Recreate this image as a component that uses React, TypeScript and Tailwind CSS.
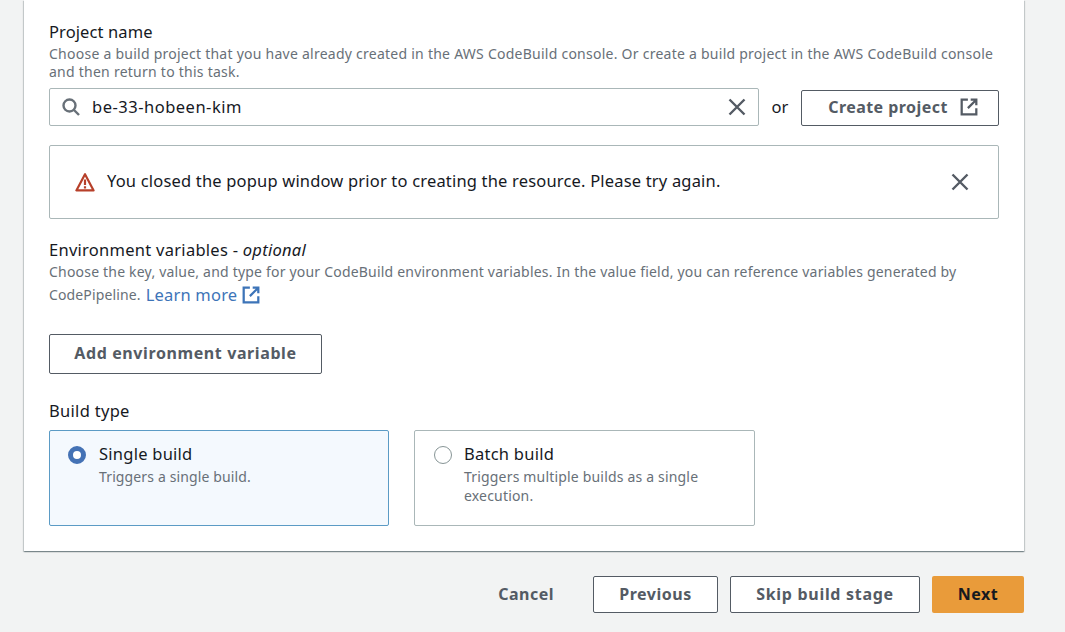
function ExternalIcon({ className }: { className?: string }) {
  return (
    <svg viewBox="0 0 16 16" fill="none" stroke="currentColor" strokeWidth={2} className={className}>
      <path d="M7 1.5H1.5v13h13V9" />
      <path d="M9.5 1.5h5v5M14.5 1.5 7 9" />
    </svg>
  )
}

function CloseIcon() {
  return (
    <svg viewBox="0 0 18 18" fill="none" stroke="#545b64" strokeWidth={2.4} className="w-[18px] h-[18px] shrink-0">
      <path d="M1.5 1.5l15 15M16.5 1.5l-15 15" />
    </svg>
  )
}

function SearchIcon() {
  return (
    <svg viewBox="0 0 18 18" fill="none" stroke="#687078" strokeWidth={2.4} className="w-[18px] h-[18px] shrink-0">
      <circle cx="7.5" cy="7.5" r="6" />
      <path d="M12 12l5 5" />
    </svg>
  )
}

function WarningIcon() {
  return (
    <svg viewBox="0 0 20 20" fill="none" className="w-5 h-5 shrink-0">
      <path d="M10 2.2 1.4 18.4h17.2L10 2.2Z" stroke="#b7402a" strokeWidth={2.2} strokeLinejoin="round" />
      <path d="M10 7.5v5.5M10 14.2v2.2" stroke="#b7402a" strokeWidth={2.2} />
    </svg>
  )
}

export default function App() {
  return (
    <div className="w-[1065px] h-[632px] overflow-hidden bg-[#f2f3f3] pl-6 font-['Noto_Sans',sans-serif] text-[#16191f]">
      <div className="w-[1000px] h-[551px] bg-white pt-[21px] px-[25px] shadow-[0_1px_1px_0_rgba(0,28,36,0.3),1px_1px_1px_0_rgba(0,28,36,0.15),-1px_1px_1px_0_rgba(0,28,36,0.15)]">
        <div className="text-[16.5px] leading-[22px] tracking-[0.1px]">Project name</div>
        <p className="mt-[2px] text-[14px] leading-[18px] tracking-[0.25px] text-[#687078]">
          Choose a build project that you have already created in the AWS CodeBuild console. Or create a build project in the AWS CodeBuild console and then return to this task.
        </p>
        <div className="flex items-center mt-[7px] h-[38px]">
          <div className="w-[710px] h-[38px] flex items-center border border-[#aab7b8] rounded-[2px] pl-[12px] pr-[12px]">
            <SearchIcon />
            <span className="ml-[12px] text-[16.5px] tracking-[0.5px] flex-1">be-33-hobeen-kim</span>
            <CloseIcon />
          </div>
          <span className="w-[42px] text-center text-[16.5px]">or</span>
          <button className="w-[198px] h-[36px] mt-[1px] pl-[6px] pb-[2px] flex items-center justify-center gap-[12px] border border-[#545b64] rounded-[2px] text-[#545b64] font-bold text-[16px] tracking-[0.45px]">
            Create project
            <ExternalIcon className="w-[18px] h-[18px]" />
          </button>
        </div>
        <div className="flex items-center mt-[19px] h-[74px] border border-[#aab7b8] rounded-[2px] pl-[25px] pr-[29px]">
          <WarningIcon />
          <span className="ml-[12px] pb-[2px] text-[16.5px] tracking-[0.18px] flex-1">You closed the popup window prior to creating the resource. Please try again.</span>
          <CloseIcon />
        </div>
        <div className="mt-[20px] text-[16.5px] leading-[22px] tracking-[0.27px]">
          Environment variables - <i>optional</i>
        </div>
        <p className="text-[14px] leading-[22px] tracking-[0.2px] text-[#687078]">
          Choose the key, value, and type for your CodeBuild environment variables. In the value field, you can reference variables generated by
        </p>
        <p className="text-[14px] leading-[24px] tracking-[0.13px] text-[#687078] flex items-center">
          CodePipeline.
          <a className="ml-[5px] text-[16.5px] tracking-[0.2px] text-[#3d74b8] flex items-center gap-[5px]">
            Learn more
            <ExternalIcon className="w-[18px] h-[18px]" />
          </a>
        </p>
        <button className="block mt-[27px] w-[273px] h-[40px] pb-[2px] border border-[#545b64] rounded-[2px] text-[#545b64] font-bold text-[16px] tracking-[0.6px]">
          Add environment variable
        </button>
        <div className="mt-[26px] text-[16.5px] leading-[22px] tracking-[0.3px]">Build type</div>
        <div className="flex gap-[25px] mt-[8px]">
          <div className="w-[340px] h-[96px] flex border border-[#5b9bc5] bg-[#f4f9fe] rounded-[2px] pl-[18px] pt-[14px]">
            <span className="w-[18px] h-[18px] mt-[1px] rounded-full border-[5px] border-[#4472b5] bg-white" />
            <div className="ml-[13px]">
              <div className="text-[16.5px] leading-[18px] tracking-[0.25px]">Single build</div>
              <div className="mt-[4px] text-[14px] leading-[19px] tracking-[0.13px] text-[#687078]">Triggers a single build.</div>
            </div>
          </div>
          <div className="w-[341px] h-[96px] flex border border-[#aab7b8] rounded-[2px] pl-[19px] pt-[14px]">
            <span className="w-[18px] h-[18px] mt-[1px] rounded-full border border-[#879596] bg-white" />
            <div className="ml-[12px]">
              <div className="text-[16.5px] leading-[18px] tracking-[0.25px]">Batch build</div>
              <div className="mt-[4px] text-[14px] leading-[19px] tracking-[0.18px] text-[#687078] w-[250px]">Triggers multiple builds as a single execution.</div>
            </div>
          </div>
        </div>
      </div>
      <div className="w-[1000px] flex items-center justify-end mt-[25px] h-[37px] text-[16px] font-bold tracking-[0.5px] text-[#545b64]">
        <span className="mr-[39px] pb-[2px]">Cancel</span>
        <button className="w-[125px] h-[37px] pb-[2px] border border-[#545b64] rounded-[2px] bg-white">Previous</button>
        <button className="ml-[12px] w-[190px] h-[37px] pb-[2px] border border-[#545b64] rounded-[2px] bg-white tracking-[0.7px]">Skip build stage</button>
        <button className="ml-[12px] w-[92px] h-[37px] pb-[2px] rounded-[2px] bg-[#e99b3a] text-[#16191f]">Next</button>
      </div>
    </div>
  )
}
